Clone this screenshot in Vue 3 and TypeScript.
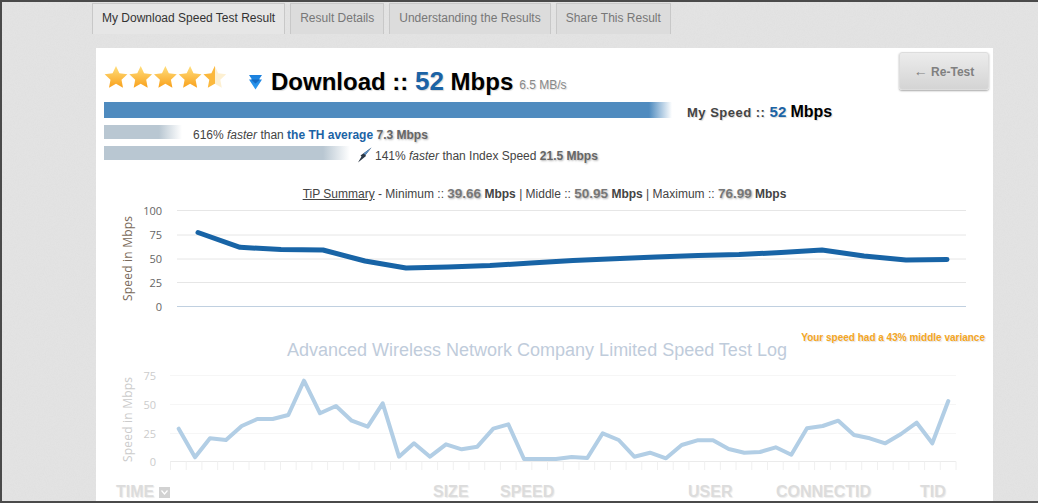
<script setup lang="ts">
const tabs = ['My Download Speed Test Result', 'Result Details', 'Understanding the Results', 'Share This Result']
const pts1: [number, number][] = [[198,232.5],[240,247.3],[281,249.5],[323,250],[365,261],[406,268],[448,267],[490,265.5],[531,263],[573,260.5],[614,258.7],[656,257],[698,255.5],[739,254.5],[781,252.5],[822,250],[864,256],[906,260],[947,259.5]]
const pts2: [number, number][] = [[178.7,428.7],[195,457.3],[210,438.3],[226,440],[241.7,426],[257.3,419],[272.7,419],[288.3,415],[304,380.7],[320,413.3],[336,406],[351.7,420.7],[367.7,426.7],[382.7,403.3],[399,456.7],[414,443.3],[430,456.7],[446,444.3],[461.7,449.3],[477.3,446.7],[493.3,428.7],[508.3,424.3],[524,459],[540,459],[556,459],[571.7,457],[587.3,458],[602.7,433.3],[618.7,440],[634.3,456.7],[650,452.7],[666,458.3],[681.7,445],[697.3,440.3],[713,440.3],[728.7,449],[744.3,452.7],[760,452],[775.7,447.3],[791.3,454.7],[807,428.3],[822.7,426],[838.3,420.7],[854,435],[869.7,438.3],[885.3,443.3],[901,434],[916.7,422.7],[932.3,443.3],[948.3,401]]
const line1 = pts1.map(([x, y]) => `${x},${y - 200}`).join(' ')
const line2 = pts2.map(([x, y]) => `${x},${y - 365}`).join(' ')
const grid1 = [{ y: 10.5, l: '100' }, { y: 35, l: '75' }, { y: 59, l: '50' }, { y: 82.5, l: '25' }]
const grid2 = [{ y: 10.5, l: '75' }, { y: 39.5, l: '50' }, { y: 68.5, l: '25' }, { y: 96.5, l: '0' }]
const ticks = Array.from({ length: 51 }, (_, i) => 170.5 + i * 15.71)
const star = 'M12 1 L15.4 8.3 L23.4 9.3 L17.5 14.8 L19 22.8 L12 18.8 L5 22.8 L6.5 14.8 L0.6 9.3 L8.6 8.3 Z'
</script>

<template>
  <div class="frame">
    <nav class="tabs">
      <div v-for="(t, i) in tabs" :key="t" class="tab" :class="{ active: i === 0 }">{{ t }}</div>
    </nav>
    <main class="card">
      <div class="head">
        <div class="headline">
          <svg class="stars" width="124" height="26" viewBox="0 0 124 26">
            <defs>
              <linearGradient id="gold" x1="0" y1="0" x2="0" y2="1">
                <stop offset="0" stop-color="#ffdf7e" />
                <stop offset="1" stop-color="#f9a11b" />
              </linearGradient>
              <linearGradient id="half" x1="0" y1="0" x2="1" y2="0">
                <stop offset="0.5" stop-color="#fbb83c" />
                <stop offset="0.5" stop-color="#fdf0d2" />
              </linearGradient>
              <linearGradient id="blueArrow" x1="0" y1="0" x2="0" y2="1">
                <stop offset="0" stop-color="#1a7fdc" />
                <stop offset="1" stop-color="#2f9cf2" />
              </linearGradient>
            </defs>
            <path v-for="i in 4" :key="i" :d="star" :transform="`translate(${(i - 1) * 24.7},0)`" fill="url(#gold)" />
            <path :d="star" transform="translate(98.8,0)" fill="url(#half)" />
          </svg>
          <svg class="down" width="15" height="16" viewBox="0 0 15 16">
            <path d="M1 1 H14 L11 5.500 H14 L7.500 15.500 L1 5.500 H4 Z" fill="url(#blueArrow)" />
            <path d="M3 5.500 H12 L7.500 9.500 Z" fill="#1569c0" />
          </svg>
          <h1 class="title">Download :: <span class="num">52</span> Mbps</h1>
          <span class="mbs">6.5 MB/s</span>
        </div>
        <button class="retest"><span class="arrow">←</span> Re-Test</button>
      </div>

      <div class="bar-row main-row">
        <div class="bar bar-main"></div>
        <div class="my-speed">My Speed :: <span class="num">52</span> <b>Mbps</b></div>
      </div>
      <div class="bar-row cmp-row">
        <div class="bar bar-a"></div>
        <div class="cmp cmp-a">616% <i>faster</i> than <b class="blue">the TH average</b> <b class="dim">7.3 Mbps</b></div>
      </div>
      <div class="bar-row cmp-row">
        <div class="bar bar-b"></div>
        <svg class="bolt" width="15" height="16" viewBox="0 0 15 16">
          <path d="M14.500 0.500 L8.500 8 L9 9 L1 15.500 L4.500 9.500 L3.500 8.500 Z" fill="#2c3946" />
          <path d="M14.500 0.500 L8.500 8 L6.500 6.500 Z" fill="#5b8fc4" />
        </svg>
        <div class="cmp">141% <i>faster</i> than Index Speed <b class="dim">21.5 Mbps</b></div>
      </div>

      <p class="summary">
        <u>TiP Summary</u> - Minimum :: <b class="val">39.66</b> <b>Mbps</b> | Middle :: <b class="val">50.95</b> <b>Mbps</b> | Maximum :: <b class="val">76.99</b> <b>Mbps</b>
      </p>

      <svg class="chart1" width="1038" height="115" viewBox="0 0 1038 115">
        <line v-for="g in grid1" :key="g.l" x1="177" x2="966" :y1="g.y" :y2="g.y" stroke="#e6e6e6" />
        <line x1="177" x2="966" y1="106.5" y2="106.5" stroke="#c0d0e0" />
        <text v-for="g in grid1" :key="'t' + g.l" x="162" :y="g.y + 4" text-anchor="end" class="axis">{{ g.l }}</text>
        <text x="162" y="110.500" text-anchor="end" class="axis">0</text>
        <text transform="translate(132,101) rotate(-90)" class="axis-title">Speed in Mbps</text>
        <polyline :points="line1" fill="none" stroke="#1864a6" stroke-width="5" stroke-linejoin="round" stroke-linecap="round" />
      </svg>

      <div class="log-head">
        <h2 class="log-title">Advanced Wireless Network Company Limited Speed Test Log</h2>
        <div class="variance">Your speed had a 43% middle variance</div>
      </div>

      <svg class="chart2" width="1038" height="115" viewBox="0 0 1038 115">
        <line v-for="g in grid2" :key="g.l" x1="170" x2="956" :y1="g.y" :y2="g.y" :stroke="g.l === '0' ? '#ebebeb' : '#f6f6f6'" />
        <line v-for="x in ticks" :key="x" :x1="x" :x2="x" y1="96.5" y2="105" stroke="#f0f0f0" />
        <text v-for="g in grid2" :key="'t' + g.l" x="156" :y="g.y + 4" text-anchor="end" class="axis light">{{ g.l }}</text>
        <text transform="translate(132,97) rotate(-90)" class="axis-title light">Speed in Mbps</text>
        <polyline :points="line2" fill="none" stroke="#b2cee5" stroke-width="4" stroke-linejoin="round" stroke-linecap="round" />
      </svg>

      <div class="cols">
        <span class="c-time">TIME <svg class="sort" width="11" height="11" viewBox="0 0 11 11"><rect width="11" height="11" fill="#d2d2d2" /><path d="M2.500 3.500 L5.500 7 L8.500 3.500" fill="none" stroke="#fff" stroke-width="1.200" /></svg></span>
        <span>SIZE</span>
        <span>SPEED</span>
        <span>USER</span>
        <span>CONNECTID</span>
        <span>TID</span>
      </div>
    </main>
  </div>
</template>

<style>
html, body { margin: 0; padding: 0; overflow: hidden; }
</style>

<style scoped>
.frame {
  box-sizing: border-box;
  width: 1038px;
  height: 503px;
  overflow: hidden;
  background-color: #e3e3e3;
  background-image: url("data:image/svg+xml,%3Csvg xmlns='http://www.w3.org/2000/svg' width='200' height='200'%3E%3Cfilter id='n'%3E%3CfeTurbulence type='fractalNoise' baseFrequency='0.9' numOctaves='2'/%3E%3CfeColorMatrix values='0 0 0 0 0.5 0 0 0 0 0.5 0 0 0 0 0.5 0 0 0 0.6 -0.2'/%3E%3C/filter%3E%3Crect width='200' height='200' filter='url(%23n)' opacity='0.25'/%3E%3C/svg%3E");
  border-top: 2px solid #4a4a4a;
  border-left: 2px solid #4a4a4a;
  border-bottom: 2px solid #4a4a4a;
  font-family: "Liberation Sans", Arial, sans-serif;
  color: #333;
}
.tabs {
  display: flex;
  gap: 5px;
  padding: 1px 0 0 90px;
  height: 31px;
}
.tab {
  box-sizing: border-box;
  height: 31px;
  padding: 0 9px;
  line-height: 28px;
  font-size: 12px;
  color: #777;
  background: #dcdcdc;
  border: 1px solid #c8c8c8;
  border-bottom: none;
}
.tab.active { background: #e6e6e6; color: #333; }
.card {
  box-sizing: border-box;
  width: 897px;
  height: 470px;
  margin: 14px 0 0 94px;
  background: #fff;
  position: relative;
}
.head { box-sizing: border-box; display: flex; justify-content: space-between; height: 54px; padding: 4px 4px 0 8px; }
.headline { display: flex; align-items: flex-start; padding-top: 13px; }
.down { margin: 9px 0 0 20px; }
.title {
  margin: 2px 0 0 8px;
  font-size: 24px;
  line-height: 28px;
  font-weight: bold;
  color: #000;
  white-space: nowrap;
  text-shadow: 1px 1px 1px rgba(0, 0, 0, .15);
}
.num { color: #1b63a5; }
.title .num { font-size: 26px; }
.mbs { font-size: 12px; color: #888; margin: 13px 0 0 6px; text-shadow: 1px 1px 1px rgba(0, 0, 0, .15); }
.retest {
  width: 90px;
  height: 38px;
  border: 1px solid #ddd;
  border-radius: 3px;
  background: linear-gradient(#ececec, #d4d4d4);
  box-shadow: 0 1px 2px rgba(0, 0, 0, .35);
  color: #808080;
  font: bold 12px "Liberation Sans", Arial, sans-serif;
}
.arrow { font-size: 14px; font-weight: normal; }
.bar-row { display: flex; padding-left: 8px; align-items: center; }
.bar { height: 16px; }
.main-row { height: 16px; }
.bar-main { width: 568px; background: linear-gradient(90deg, #4f8bbf 0, #4f8bbf 545px, #fff 100%); }
.my-speed {
  margin: 4px 0 0 15px;
  font-size: 13px;
  font-weight: bold;
  color: #444;
  white-space: nowrap;
  letter-spacing: .5px;
  text-shadow: 1px 1px 1px rgba(0, 0, 0, .15);
}
.my-speed .num { font-size: 15px; letter-spacing: 0; }
.my-speed b { color: #000; font-size: 16px; letter-spacing: 0; }
.cmp-row { height: 14px; margin-top: 7px; }
.cmp-row .bar { height: 14px; }
.bar-a { width: 78px; background: linear-gradient(90deg, #b9c7d2 0, #b9c7d2 55px, #fff 100%); }
.bar-b { width: 246px; background: linear-gradient(90deg, #b9c7d2 0, #b9c7d2 219px, #fff 100%); }
.cmp { font-size: 12px; color: #444; white-space: nowrap; margin-top: 6px; }
.cmp-a { margin-left: 11px; }
.blue { color: #1b63a5; }
.dim { color: #666; text-shadow: 1px 1px 2px rgba(0, 0, 0, .3); }
.bolt { margin: 4px 3px 0 7px; }
.summary {
  margin: 27px 0 0;
  text-align: center;
  font-size: 12px;
  line-height: 14px;
  color: #444;
}
.val { font-size: 13.500px; color: #777; text-shadow: 1px 1px 2px rgba(0, 0, 0, .3); }
.chart1 { display: block; margin: -1px 0 0 -96px; }
.chart2 { display: block; margin: 0 0 0 -96px; }
.axis { font: 11px "Open Sans", sans-serif; fill: #666; }
.axis-title { font: 12px "Open Sans", sans-serif; fill: #7a6a5a; letter-spacing: .2px; }
.light { fill: #ccc; }
.log-head { position: relative; height: 50px; }
.log-title {
  margin: 0;
  padding: 24px 0 0 191px;
  font-size: 18px;
  line-height: 22px;
  font-weight: normal;
  color: #bfccdb;
  white-space: nowrap;
}
.variance {
  position: absolute;
  right: 8px;
  top: 17px;
  font-size: 10px;
  font-weight: bold;
  color: #f5a623;
  text-shadow: 1px 1px 1px rgba(0, 0, 0, .12);
}
.cols {
  display: grid;
  grid-template-columns: 317px 67px 188px 88px 144px auto;
  padding-left: 20px;
  margin-top: 3px;
  font-size: 16px;
  font-weight: bold;
  color: #dcdcdc;
  white-space: nowrap;
  text-shadow: 1px 1px 1px rgba(0, 0, 0, .08);
}
.sort { vertical-align: -1px; }
</style>
